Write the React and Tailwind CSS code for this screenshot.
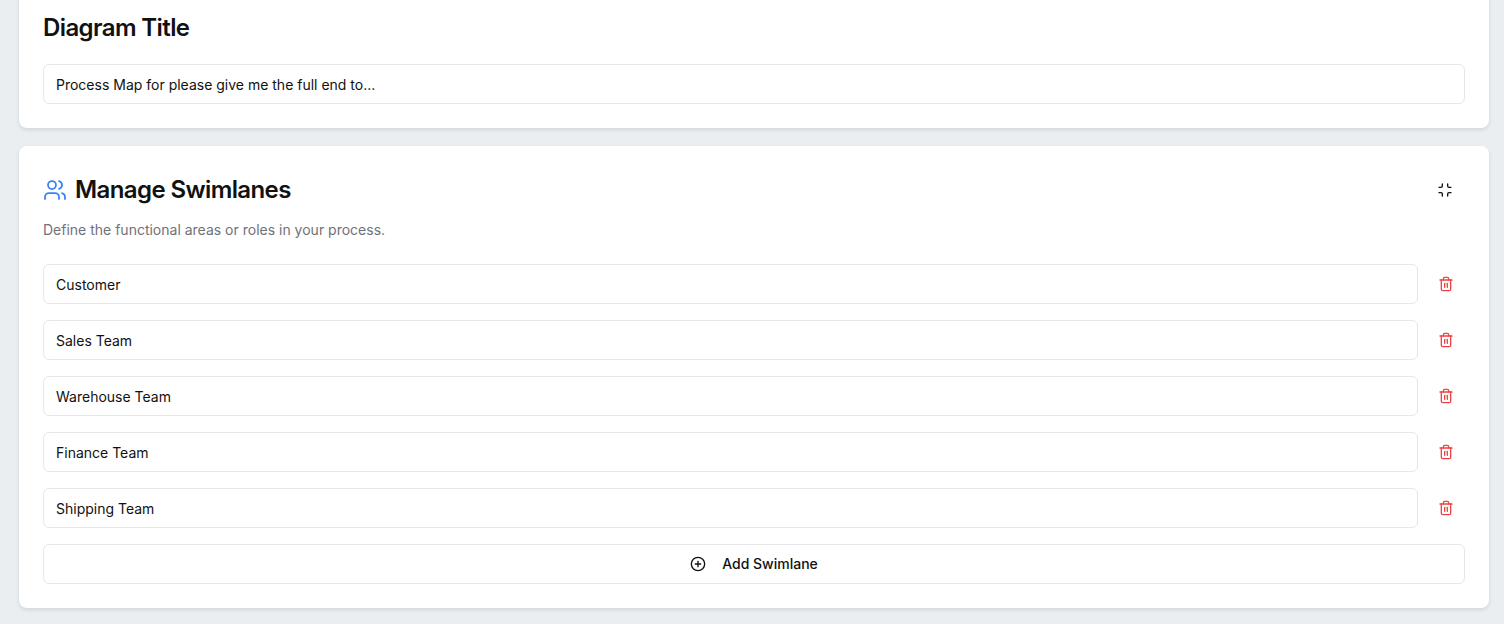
import { Users, Minimize, Trash2, CirclePlus } from 'lucide-react';

const swimlanes = ['Customer', 'Sales Team', 'Warehouse Team', 'Finance Team', 'Shipping Team'];

const inputClass = 'h-10 w-full rounded-md border border-[#e5e7eb] bg-white px-3 text-sm text-[#111111] outline-none';

export default function App() {
    return (
        <div className="h-[624px] overflow-hidden bg-[#ebeef1] pl-[19px] pr-[15px] font-['Inter',sans-serif] text-[#111111] antialiased">
            {/* Diagram title */}
            <div className="-mt-3 rounded-lg bg-white px-6 pb-6 pt-6 shadow-[0_2px_4px_rgba(0,0,0,0.1)]">
                <h2 className="text-2xl font-semibold leading-8 tracking-tight">Diagram Title</h2>
                <input className={`${inputClass} mt-5`} defaultValue="Process Map for please give me the full end to..." />
            </div>

            {/* Swimlanes */}
            <div className="mt-[18px] rounded-lg bg-white px-6 pb-6 pt-6 shadow-[0_2px_4px_rgba(0,0,0,0.1)]">
                <div className="flex items-center justify-between">
                    <div className="flex items-center gap-2">
                        <Users className="h-6 w-6 text-[#3b82f6]" strokeWidth={1.75} />
                        <h2 className="text-2xl font-semibold leading-8 tracking-tight">Manage Swimlanes</h2>
                    </div>
                    <button className="flex h-10 w-10 items-center justify-center">
                        <Minimize className="h-4 w-4" />
                    </button>
                </div>
                <p className="mt-[10px] text-sm leading-5 text-[#71717a]">Define the functional areas or roles in your process.</p>
                <div className="mt-6 flex flex-col gap-4">
                    {swimlanes.map((name) => (
                        <div key={name} className="flex items-center gap-2">
                            <input className={inputClass} defaultValue={name} />
                            <button className="flex h-10 w-[39px] flex-shrink-0 items-center justify-center">
                                <Trash2 className="h-4 w-4 text-[#f04444]" />
                            </button>
                        </div>
                    ))}
                    <button className="flex h-10 w-full items-center justify-center gap-4 rounded-md border border-[#e5e7eb] bg-white text-sm font-medium">
                        <CirclePlus className="h-4 w-4" />
                        Add Swimlane
                    </button>
                </div>
            </div>
        </div>
    );
}
